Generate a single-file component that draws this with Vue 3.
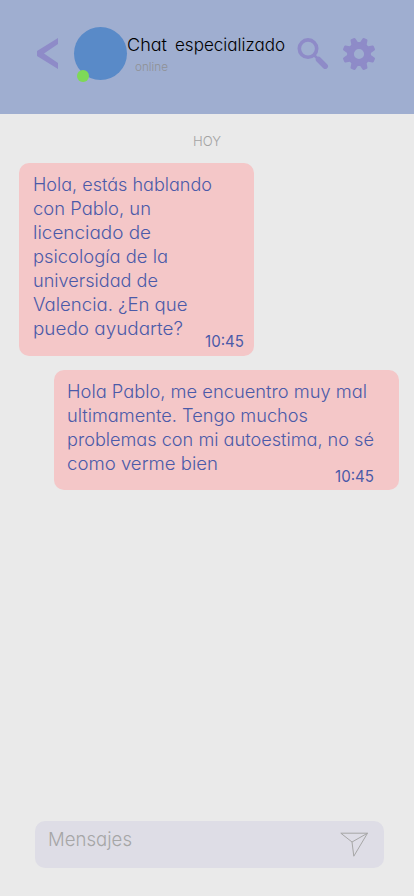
<script setup>
const messages = [
  {
    side: 'received',
    time: '10:45',
    lines: [
      ['Hola, estás hablando', 179],
      ['con Pablo, un', 118],
      ['licenciado de', 118],
      ['psicología de la', 135],
      ['universidad de', 125],
      ['Valencia. ¿En que', 154.5],
      ['puedo ayudarte?', 150],
    ],
  },
  {
    side: 'sent',
    time: '10:45',
    lines: [
      ['Hola Pablo, me encuentro muy mal', 300],
      ['ultimamente. Tengo muchos', 241],
      ['problemas con mi autoestima, no sé', 307],
      ['como verme bien', 151],
    ],
  },
]

// Widens the letters of a text so that it fills the given width.
const vFit = {
  mounted(el, { value }) {
    el.style.display = 'inline-block'
    const natural = el.getBoundingClientRect().width
    el.style.transformOrigin = '0 50%'
    el.style.transform = `scaleX(${value / natural})`
    el.style.marginRight = `${value - natural}px`
  },
}
</script>

<template>
  <div class="screen">
    <header class="header">
      <svg class="back" viewBox="0 0 22 32" aria-label="Volver">
        <path d="M21 0v6L7 15.500l14 9.500v6L0 18v-5z" />
      </svg>
      <div class="avatar"><span class="status"></span></div>
      <div class="contact">
        <h1 class="name"><span v-fit="40">Chat</span><span v-fit="110">especializado</span></h1>
        <p class="presence"><span v-fit="33">online</span></p>
      </div>
      <svg class="search" viewBox="0 0 32 32" aria-label="Buscar">
        <circle cx="11" cy="10.600" r="8.700" fill="none" stroke="#8e8bc8" stroke-width="3.600" />
        <path d="M17 17l4 4" stroke="#8e8bc8" stroke-width="2.500" />
        <path d="M21.500 21.500l6.700 6.700" stroke="#8e8bc8" stroke-width="5.500" stroke-linecap="round" />
      </svg>
      <svg class="gear" viewBox="-16 -16 32 32" aria-label="Ajustes">
        <circle r="8.500" fill="none" stroke="#8e8bc8" stroke-width="6.800" />
        <path
          v-for="n in 8"
          :key="n"
          :transform="`rotate(${n * 45 - 22.5})`"
          d="M-3.700-10.500L-2.700-15.500Q-2.500-16.600-1.500-16.600h3Q2.500-16.600 2.700-15.500L3.700-10.500z"
        />
      </svg>
    </header>

    <main class="chat">
      <p class="day"><span v-fit="28">HOY</span></p>
      <article v-for="message in messages" :key="message.side" class="bubble" :class="message.side">
        <p class="text">
          <span v-for="[line, width] in message.lines" :key="line" class="line">
            <span v-fit="width">{{ line }}</span>
          </span>
        </p>
        <time class="time"><span v-fit="39">{{ message.time }}</span></time>
      </article>
    </main>

    <footer class="composer">
      <span class="placeholder"><span v-fit="84">Mensajes</span></span>
      <svg class="send" viewBox="0 0 28 26" aria-label="Enviar">
        <path d="M.8 1.200H27.500L13.800 24.200L12 10zM12 10L27.500 1.200" />
      </svg>
    </footer>
  </div>
</template>

<style>
body {
  background: #eaeaea;
}
</style>

<style scoped>
.screen {
  display: flex;
  flex-direction: column;
  box-sizing: border-box;
  width: 414px;
  height: 896px;
  padding-bottom: 28px;
  background: #eaeaea;
  font-family: Inter, "Liberation Sans", sans-serif;
  font-weight: 300;
  font-feature-settings: "cv11" 1;
  font-optical-sizing: none;
}
.screen span {
  white-space: pre;
}
h1,
p {
  margin: 0;
  font-weight: inherit;
}
.header {
  display: flex;
  align-items: flex-start;
  flex: none;
  box-sizing: border-box;
  height: 114px;
  padding: 27px 0 0 37px;
  background: #9faed0;
}
.back {
  width: 22px;
  height: 32px;
  margin-top: 11px;
  fill: #8e8bc8;
}
.avatar {
  position: relative;
  width: 53px;
  height: 53px;
  margin-left: 15px;
  border-radius: 50%;
  background: #598ac8;
}
.status {
  position: absolute;
  left: 3px;
  bottom: -2px;
  width: 11.5px;
  height: 12px;
  border-radius: 50%;
  background: #7ed957;
}
.contact {
  width: 170px;
  padding-top: 6px;
}
.name {
  display: flex;
  gap: 8px;
  font-size: 17.5px;
  line-height: 24px;
  color: #000;
}
.presence {
  padding-left: 8px;
  font-size: 11.5px;
  line-height: 20px;
  color: #8f9195;
}
.search {
  width: 32px;
  height: 32px;
  margin: 11px 0 0;
}
.gear {
  width: 32px;
  height: 32px;
  margin: 10.5px 0 0 14px;
  overflow: visible;
  fill: #8e8bc8;
}
.chat {
  display: flex;
  flex-direction: column;
  flex: 1;
}
.day {
  height: 28px;
  margin-top: 17px;
  padding-left: 193px;
  font-size: 13.5px;
  line-height: 20px;
  color: #a3a3a3;
}
.bubble {
  display: flex;
  flex-direction: column;
  box-sizing: border-box;
  margin-top: 4px;
  border-radius: 10px;
  background: #f4c7c8;
  color: #4b5aa8;
}
.received {
  width: 235px;
  height: 193px;
  margin-left: 19px;
  padding: 10px 10.5px 0 13.5px;
}
.sent {
  width: 344.5px;
  height: 120px;
  margin: 14px 0 0 54px;
  padding: 10px 25px 0 13px;
}
.text {
  font-size: 18px;
  line-height: 24px;
}
.line {
  display: block;
  height: 24px;
}
.time {
  align-self: flex-end;
  margin-top: -10px;
  font-size: 16px;
  font-weight: 400;
  line-height: 20px;
}
.composer {
  display: flex;
  justify-content: space-between;
  flex: none;
  box-sizing: border-box;
  width: 349px;
  height: 47px;
  margin-left: 35px;
  padding: 7px 16px 0 13px;
  border-radius: 10px;
  background: #dedde6;
}
.placeholder {
  font-size: 19px;
  line-height: 24px;
  color: #a6a6a6;
}
.send {
  width: 28px;
  height: 26px;
  margin-top: 4px;
  fill: none;
  stroke: #a6a6a6;
  stroke-width: 1;
  stroke-linejoin: round;
}
</style>
